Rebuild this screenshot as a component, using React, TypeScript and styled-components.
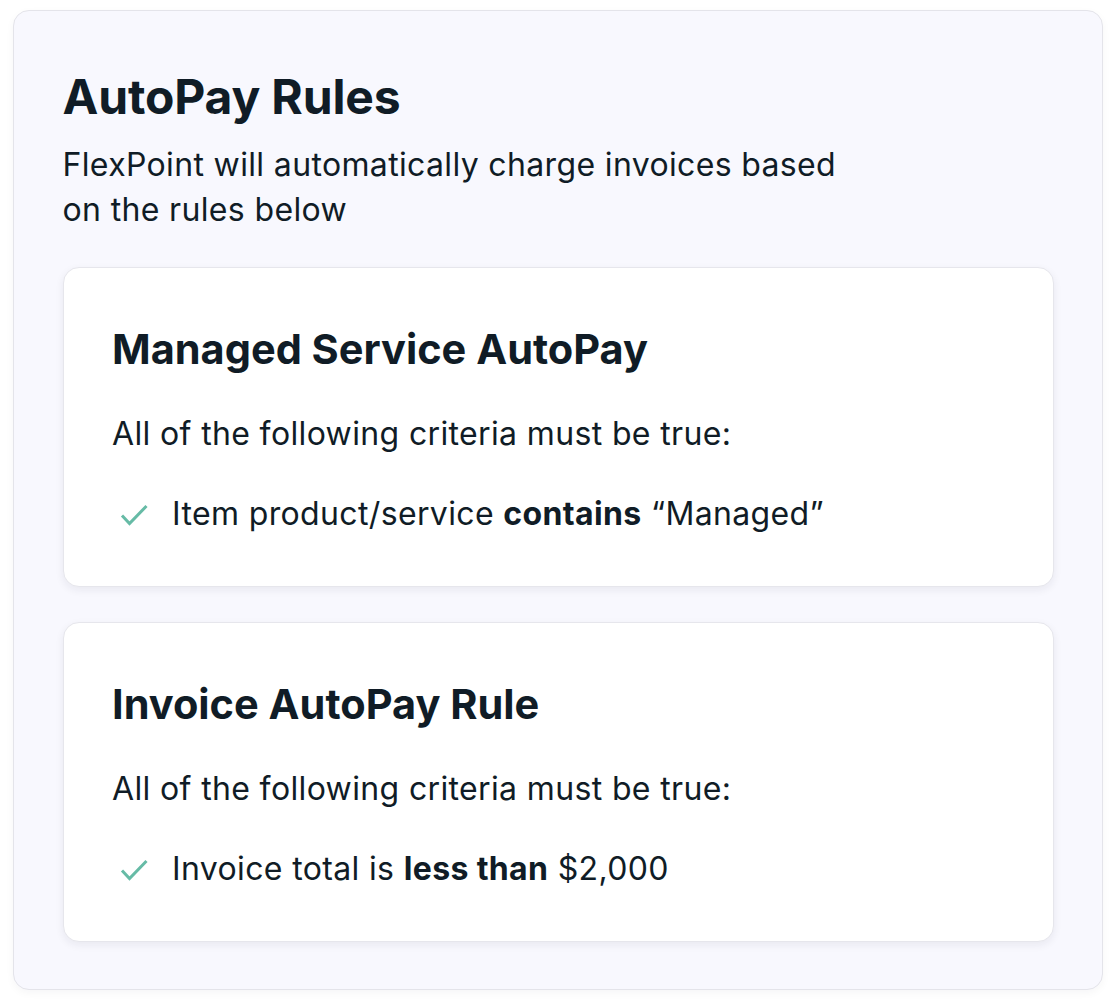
import React from "react";
import styled, { createGlobalStyle } from "styled-components";

const GlobalStyle = createGlobalStyle`
  html, body {
    margin: 0;
    padding: 0;
    background: #ffffff;
  }
  body {
    font-family: "Inter", "Liberation Sans", sans-serif;
    color: #101c26;
  }
`;

interface RuleCardProps {
  title: string;
  children: React.ReactNode;
}

const CheckIcon = () => (
  <CheckSvg viewBox="0 0 28 22" fill="none">
    <path d="M2 11.5L9.5 19.5L26.5 2" stroke="#66bba6" strokeWidth="3" />
  </CheckSvg>
);

const RuleCard: React.FC<RuleCardProps> = ({ title, children }) => {
  return (
    <Card>
      <CardTitle>{title}</CardTitle>
      <Criteria>All of the following criteria must be true:</Criteria>
      <CriteriaRow>
        <CheckIcon />
        <span>{children}</span>
      </CriteriaRow>
    </Card>
  );
};

export default function App() {
  return (
    <>
      <GlobalStyle />
      <Page>
        <Panel>
          <Heading>AutoPay Rules</Heading>
          <Subheading>
            FlexPoint will automatically charge invoices based
            <br />
            on the rules below
          </Subheading>
          <CardList>
            <RuleCard title="Managed Service AutoPay">
              Item product/service <b>contains</b> “Managed”
            </RuleCard>
            <RuleCard title="Invoice AutoPay Rule">
              Invoice total is <b>less than</b> $2,000
            </RuleCard>
          </CardList>
        </Panel>
      </Page>
    </>
  );
}

const Page = styled.div`
  width: 1114px;
  height: 1004px;
  padding: 10px 11px 14px 13px;
  box-sizing: border-box;
`;

const Panel = styled.div`
  height: 980px;
  box-sizing: border-box;
  padding: 56px 48.5px 48px 48.5px;
  background: #f8f8fe;
  border: 1.5px solid #e4e4ea;
  border-radius: 16px;
  box-shadow: 0 3px 8px rgba(30, 30, 60, 0.04);
`;

const Heading = styled.h1`
  margin: 0;
  font-size: 48px;
  line-height: 60px;
  font-weight: 700;
  letter-spacing: -0.15px;
`;

const Subheading = styled.p`
  margin: 15px 0 0;
  font-size: 32px;
  line-height: 45px;
  font-weight: 400;
  letter-spacing: 0.35px;
`;

const CardList = styled.div`
  display: flex;
  flex-direction: column;
  gap: 35px;
  margin-top: 35px;
`;

const Card = styled.div`
  height: 320px;
  box-sizing: border-box;
  padding: 51px 48.5px 0;
  background: #ffffff;
  border: 1.5px solid #e6e6ec;
  border-radius: 16px;
  box-shadow: 0 3px 8px rgba(30, 30, 60, 0.07);
`;

const CardTitle = styled.h2`
  margin: 0;
  font-size: 41.5px;
  line-height: 60px;
  font-weight: 700;
`;

const Criteria = styled.div`
  margin-top: 32px;
  font-size: 32px;
  line-height: 45px;
  letter-spacing: 0.36px;
`;

const CriteriaRow = styled.div`
  display: flex;
  align-items: center;
  gap: 24px;
  margin-top: 35px;
  padding-left: 8px;
  font-size: 32px;
  line-height: 45px;
  letter-spacing: 0.36px;

  b {
    font-weight: 700;
  }
`;

const CheckSvg = styled.svg`
  width: 28px;
  height: 22px;
  flex: none;
  margin-top: 2px;
`;
